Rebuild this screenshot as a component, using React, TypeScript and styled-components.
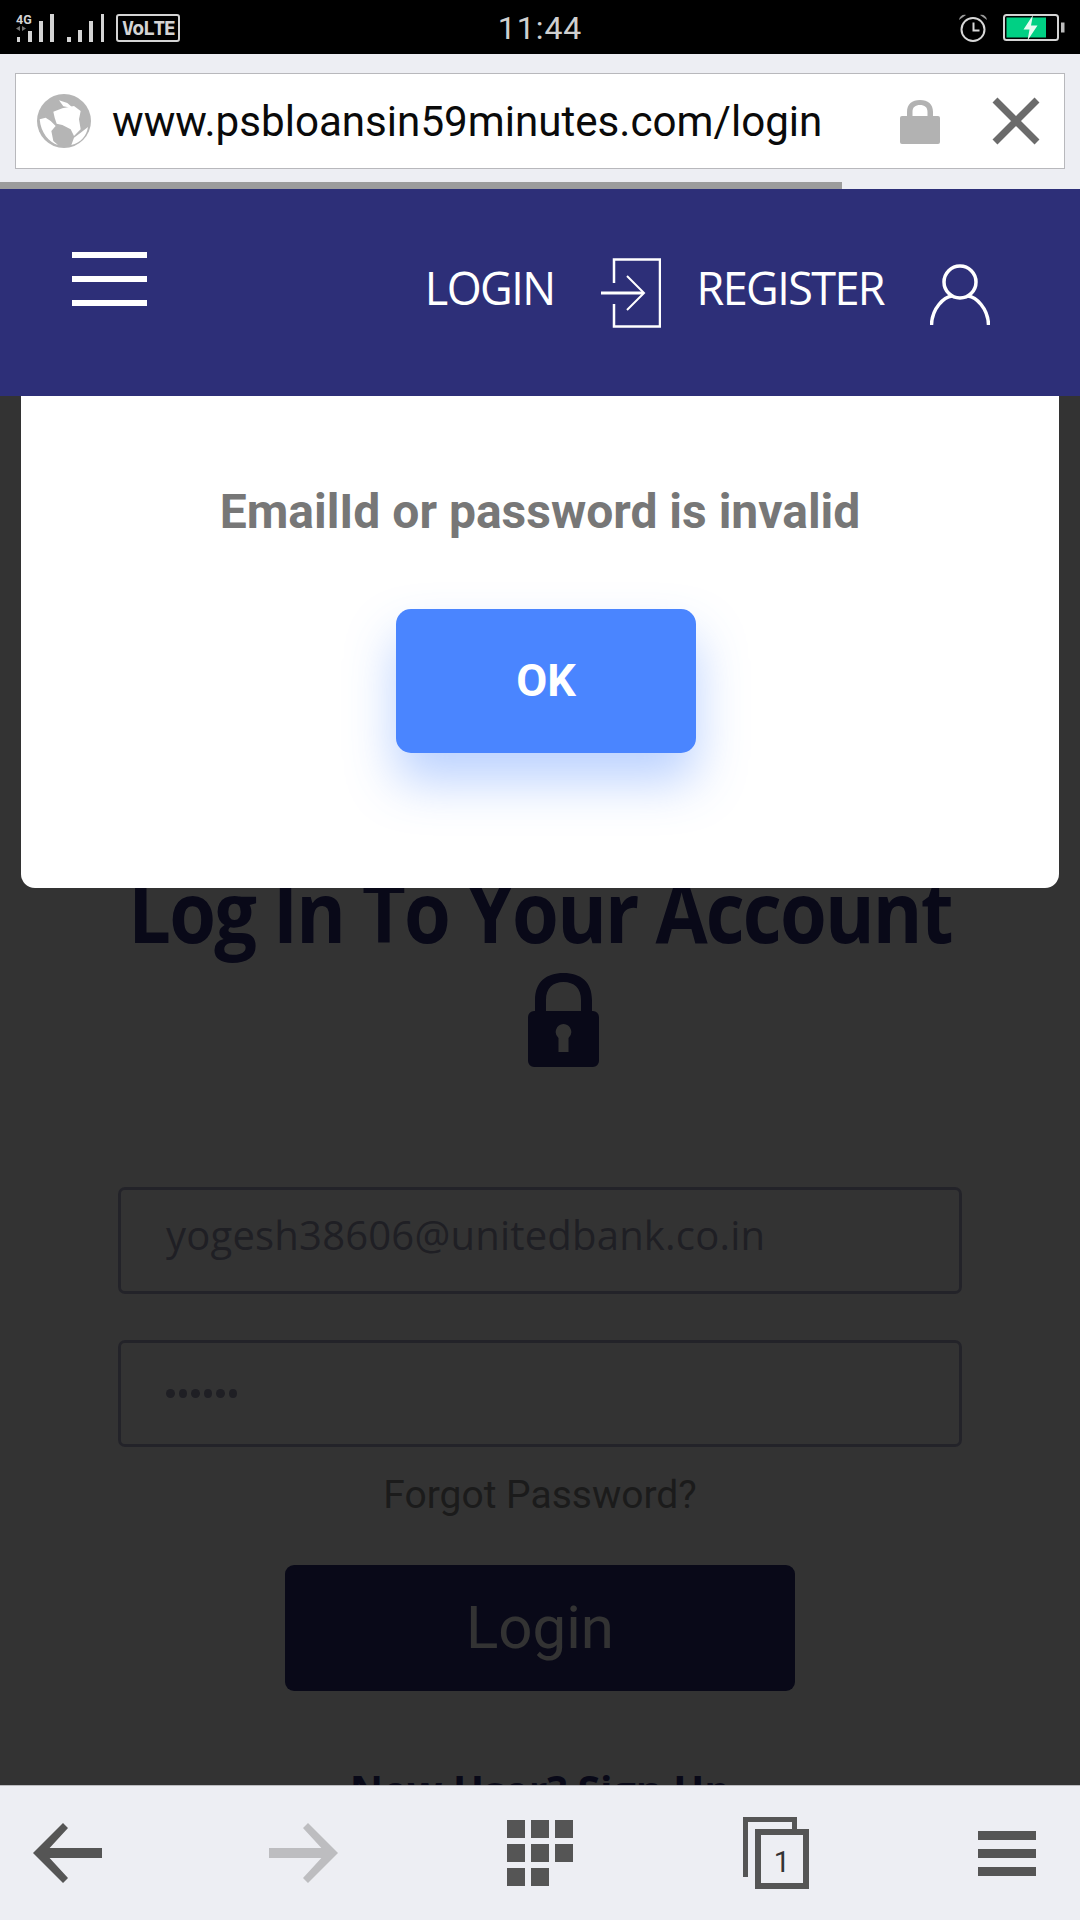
import React from "react";
import styled, { createGlobalStyle } from "styled-components";

const navy = "#2d2f78";

const GlobalStyle = createGlobalStyle`
  html, body {
    margin: 0;
    padding: 0;
    background: #000;
  }
  * {
    box-sizing: border-box;
  }
`;

const Screen = styled.div`
  width: 1080px;
  height: 1920px;
  display: flex;
  flex-direction: column;
  overflow: hidden;
  font-family: Roboto, "Liberation Sans", sans-serif;
`;

const StatusBar = styled.div`
  height: 54px;
  flex: none;
  background: #000;
  display: grid;
  grid-template-columns: 1fr auto 1fr;
  align-items: center;
  padding: 0 15px;
`;

const StatusLeft = styled.div`
  display: flex;
  align-items: center;
  gap: 11px;
`;

const StatusRight = styled.div`
  display: flex;
  align-items: center;
  justify-content: flex-end;
  gap: 15px;
`;

const VolteBadge = styled.div`
  width: 64px;
  height: 28px;
  border: 2px solid #d4d4d4;
  border-radius: 3px;
  color: #d4d4d4;
  font-family: "DejaVu Sans Mono", monospace;
  font-size: 20px;
  font-weight: 700;
  line-height: 24px;
  text-align: center;
  letter-spacing: -1.6px;
`;

const Clock = styled.div`
  color: #cfcfcf;
  font-size: 32px;
  letter-spacing: 1px;
  line-height: 56px;
`;

const BrowserBar = styled.div`
  height: 135px;
  flex: none;
  background: #edeef3;
  padding-top: 19px;
`;

const AddressBox = styled.div`
  height: 96px;
  margin: 0 15px;
  background: #fff;
  border: 1px solid #b8b8bc;
  display: flex;
  align-items: center;
  padding: 0 24px 0 21px;
`;

const UrlText = styled.div`
  flex: 1;
  margin-left: 21px;
  color: #0a0a0a;
  font-size: 42.15px;
  white-space: nowrap;
`;

const AddressLock = styled.div`
  display: flex;
  margin-right: 52px;
`;

const ProgressBar = styled.div<{ $percent: number }>`
  width: ${(p) => p.$percent}%;
  height: 7px;
  margin-top: 13px;
  background: #9c9c9c;
`;

const NavBar = styled.div`
  height: 207px;
  flex: none;
  background: ${navy};
  position: relative;
  z-index: 3;
  display: flex;
  padding: 63px 90px 0 72px;
  color: #fff;
`;

const Burger = styled.div`
  width: 75px;
  display: flex;
  flex-direction: column;
  gap: 18px;
`;

const BurgerLine = styled.span`
  height: 6px;
  background: #fff;
`;

const NavGroup = styled.div`
  margin-left: auto;
  display: flex;
  align-items: flex-start;
`;

const NavLabel = styled.div<{ $before: number; $after: number }>`
  font-family: "Open Sans", sans-serif;
  font-size: 45px;
  line-height: 40px;
  margin: 16px ${(p) => p.$after}px 0 ${(p) => p.$before}px;
  letter-spacing: -1.6px;
  white-space: nowrap;
`;

const NavIcon = styled.div<{ $drop: number }>`
  display: flex;
  margin-top: ${(p) => p.$drop}px;
`;

const PageArea = styled.div`
  flex: 1;
  position: relative;
  overflow: hidden;
  background: #fff;
`;

const PageContent = styled.div`
  padding: 470px 118px 0;
  display: flex;
  flex-direction: column;
  align-items: stretch;
`;

const Heading = styled.h1`
  margin: 0 -118px;
  font-family: "Open Sans", sans-serif;
  font-size: 84px;
  line-height: 90px;
  font-weight: 700;
  letter-spacing: -2px;
  color: ${navy};
  text-align: center;
  white-space: nowrap;
  transform: scaleX(0.9);
`;

const LockRow = styled.div`
  display: flex;
  justify-content: center;
  padding-left: 46px;
  margin-top: 16px;
  margin-bottom: 120px;
`;

const Field = styled.div<{ $gap: number }>`
  height: 107px;
  margin-bottom: ${(p) => p.$gap}px;
  border: 3px solid #b0b0cc;
  border-radius: 7px;
  padding-left: 45px;
  color: #9a9ab4;
  font-family: "Open Sans", sans-serif;
  font-size: 40px;
  letter-spacing: 0.2px;
  line-height: 90px;
`;

const Dots = styled.div`
  display: flex;
  gap: 4px;
  height: 100%;
  align-items: center;
`;

const Dot = styled.span`
  width: 8.5px;
  height: 9px;
  border-radius: 50%;
  background: #9a9ab4;
`;

const ForgotLink = styled.div`
  margin-top: 25px;
  text-align: center;
  color: #888;
  font-size: 39px;
  line-height: 46px;
`;

const LoginButton = styled.div`
  width: 510px;
  height: 126px;
  margin: 47px auto 0;
  background: ${navy};
  border-radius: 9px;
  color: #fff;
  font-size: 60px;
  text-align: center;
  line-height: 126px;
`;

const SignUpLine = styled.div`
  margin-top: 72px;
  text-align: center;
  color: ${navy};
  font-family: "Open Sans", sans-serif;
  font-size: 41px;
  font-weight: 700;
  line-height: 54px;
`;

const Overlay = styled.div`
  position: absolute;
  inset: 0;
  background: rgba(0, 0, 0, 0.8);
`;

const Modal = styled.div`
  position: absolute;
  top: 0;
  left: 21px;
  width: 1038px;
  height: 492px;
  background: #fff;
  border-radius: 0 0 14px 14px;
  display: flex;
  flex-direction: column;
  align-items: center;
`;

const ModalText = styled.div`
  margin-top: 88px;
  color: #777;
  font-size: 48px;
  font-weight: 700;
  line-height: 56px;
  white-space: nowrap;
`;

const OkButton = styled.div`
  width: 300px;
  height: 144px;
  margin-top: 69px;
  margin-left: 12px;
  background: #4a85ff;
  border-radius: 15px;
  color: #fff;
  font-size: 45px;
  font-weight: 700;
  line-height: 144px;
  text-align: center;
  box-shadow: 0 28px 50px rgba(74, 133, 255, 0.38);
`;

const ToolBar = styled.div`
  height: 135px;
  flex: none;
  background: #edeef3;
  border-top: 1px solid #bcbcc0;
  position: relative;
  z-index: 3;
  display: flex;
  align-items: center;
  padding-left: 33px;
`;

const ToolItem = styled.div<{ $gap: number }>`
  display: flex;
  margin-right: ${(p) => p.$gap}px;
`;

const ArrowSvg = styled.svg<{ $flip?: boolean }>`
  transform: ${(p) => (p.$flip ? "scaleX(-1)" : "none")};
`;

const SignalIcon = () => (
  <svg width="90" height="36" viewBox="15 9 90 36">
    <text x="16" y="23" fill="#d4d4d4" fontFamily="Roboto, sans-serif" fontSize="12.5" fontWeight="700">
      4G
    </text>
    <path d="M20 25l-4 2.500 4 2.500zM22 25l4 2.500-4 2.500z" fill="#777" />
    <path
      d="M17 36h3v5h-3zM28 30h4v11h-4zM39 20h4v21h-4zM50 13h4v28h-4zM67 36h4v5h-4zM78 29h4v12h-4zM89 20h4v21h-4zM101 13h3v28h-3z"
      fill="#d4d4d4"
    />
  </svg>
);

const AlarmIcon = () => (
  <svg width="30" height="30" viewBox="0 0 30 30">
    <circle cx="15" cy="16.5" r="11.5" fill="none" stroke="#d8d8d8" strokeWidth="2" />
    <path d="M15.500 9.500v8h6" fill="none" stroke="#d8d8d8" strokeWidth="2" />
    <path d="M1 7c.5-4 4-6 7-5zM29 7c-.5-4-4-6-7-5z" fill="#9a9a9a" />
  </svg>
);

const BatteryIcon = () => (
  <svg width="62" height="28" viewBox="0 0 62 28">
    <rect x="1" y="1" width="54" height="25" rx="2.5" fill="none" stroke="#d4d4d4" strokeWidth="2" />
    <rect x="3.5" y="3.5" width="39.5" height="20" fill="#00d084" />
    <rect x="58" y="8.5" width="3.5" height="10" fill="#bcbcbc" />
    <path d="M30 1l-9.500 14.500h6l-2 11 10-15h-6.500z" fill="#e6fbf2" />
  </svg>
);

const GlobeIcon = () => (
  <svg width="54" height="54" viewBox="19 19 162 162">
    <circle cx="100" cy="100" r="81" fill="#b5b5b5" />
    <path d="M68 72L95 62l35-7 20 15-5 25 5 30-20 20-10-20-25-13-17-4-6-18z" fill="#fff" />
    <path d="M27 95l18-5 15 10 15 15-13 15 6 30 14 12C55 165 30 135 27 95z" fill="#fff" />
    <path d="M122 172l8-22 20-15 22-17c-4 27-22 47-50 54z" fill="#fff" />
    <path d="M85 38l25 8 18 16-30-6z" fill="#fff" />
  </svg>
);

const PadlockSmall = () => (
  <svg width="40" height="45" viewBox="0 0 40 45">
    <path d="M7 17v-4C7 5 12 1 20 1s13 4 13 12v4h-5.500v-4c0-5-3-7-7.500-7s-7.500 2-7.500 7v4z" fill="#b2b2b2" />
    <rect x="0" y="17" width="40" height="28" rx="2" fill="#b2b2b2" />
  </svg>
);

const CloseIcon = () => (
  <svg width="48" height="48" viewBox="0 0 48 48">
    <path d="M3 3l42 42M45 3L3 45" stroke="#6b6b6b" strokeWidth="7" fill="none" />
  </svg>
);

const DoorArrowIcon = () => (
  <svg width="60" height="70" viewBox="0 0 60 70">
    <path d="M13 25V1.500h46v67H13V46" fill="none" stroke="#fff" strokeWidth="2.5" />
    <path d="M0 35h42" stroke="#fff" strokeWidth="3" />
    <path d="M26 18l17 17-17 17" fill="none" stroke="#fff" strokeWidth="2" />
  </svg>
);

const PersonIcon = () => (
  <svg width="60" height="62" viewBox="0 0 60 62">
    <ellipse cx="30" cy="18" rx="16" ry="16" fill="none" stroke="#fff" strokeWidth="3.5" />
    <path d="M1.500 61C2 44 14 33 22 32M58.500 61C58 44 46 33 38 32" fill="none" stroke="#fff" strokeWidth="3.5" />
  </svg>
);

const BigLock = () => (
  <svg width="71" height="95" viewBox="0 0 71 95">
    <path d="M7 42V28C7 10 18 1 35.500 1S64 10 64 28v14H53V28c0-12-7-18-17.500-18S18 16 18 28v14z" fill={navy} />
    <path
      fillRule="evenodd"
      d="M6 39h59a6 6 0 0 1 6 6v44a6 6 0 0 1-6 6H6a6 6 0 0 1-6-6V45a6 6 0 0 1 6-6zM35.500 52a8 8 0 0 0-5 14v14h10V66a8 8 0 0 0-5-14z"
      fill={navy}
    />
  </svg>
);

const ArrowIcon = ({ color, flip }: { color: string; flip?: boolean }) => (
  <ArrowSvg width="69" height="60" viewBox="0 0 69 60" $flip={flip}>
    <path d="M30 0l5 5L12 30l23 25-5 5L0 30z" fill={color} />
    <path d="M12 25h57v10H12z" fill={color} />
  </ArrowSvg>
);

const GridIcon = () => (
  <svg width="66" height="66" viewBox="0 0 66 66">
    <path
      d="M0 0h18v18H0zM24 0h18v18H24zM48 0h18v18H48zM0 24h18v18H0zM24 24h18v18H24zM48 24h18v18H48zM0 48h18v18H0zM24 48h18v18H24z"
      fill="#555"
    />
  </svg>
);

const TabsIcon = () => (
  <svg width="66" height="72" viewBox="0 0 66 72">
    <path d="M0 60V0h54v18h-5V5H5v55z" fill="#555" />
    <path fillRule="evenodd" d="M12 12h54v60H12zM18 18v48h42V18z" fill="#555" />
    <text x="39" y="55" textAnchor="middle" fill="#333" fontFamily="Roboto, sans-serif" fontSize="29">
      1
    </text>
  </svg>
);

const MenuIcon = () => (
  <svg width="58" height="45" viewBox="0 0 58 45">
    <path d="M0 0h58v9H0zM0 18h58v9H0zM0 36h58v9H0z" fill="#555" />
  </svg>
);

const App: React.FC = () => {
  return (
    <Screen>
      <GlobalStyle />
      <StatusBar>
        <StatusLeft>
          <SignalIcon />
          <VolteBadge>VoLTE</VolteBadge>
        </StatusLeft>
        <Clock>11:44</Clock>
        <StatusRight>
          <AlarmIcon />
          <BatteryIcon />
        </StatusRight>
      </StatusBar>

      <BrowserBar>
        <AddressBox>
          <GlobeIcon />
          <UrlText>www.psbloansin59minutes.com/login</UrlText>
          <AddressLock>
            <PadlockSmall />
          </AddressLock>
          <CloseIcon />
        </AddressBox>
        <ProgressBar $percent={78} />
      </BrowserBar>

      <NavBar>
        <Burger>
          <BurgerLine />
          <BurgerLine />
          <BurgerLine />
        </Burger>
        <NavGroup>
          <NavLabel $before={0} $after={47}>
            LOGIN
          </NavLabel>
          <NavIcon $drop={6}>
            <DoorArrowIcon />
          </NavIcon>
          <NavLabel $before={35} $after={46}>
            REGISTER
          </NavLabel>
          <NavIcon $drop={12}>
            <PersonIcon />
          </NavIcon>
        </NavGroup>
      </NavBar>

      <PageArea>
        <PageContent>
          <Heading>Log In To Your Account</Heading>
          <LockRow>
            <BigLock />
          </LockRow>
          <Field $gap={46}>yogesh38606@unitedbank.co.in</Field>
          <Field $gap={0}>
            <Dots>
              {[0, 1, 2, 3, 4, 5].map((i) => (
                <Dot key={i} />
              ))}
            </Dots>
          </Field>
          <ForgotLink>Forgot Password?</ForgotLink>
          <LoginButton>Login</LoginButton>
          <SignUpLine>New User? Sign Up</SignUpLine>
        </PageContent>
        <Overlay />
        <Modal>
          <ModalText>EmailId or password is invalid</ModalText>
          <OkButton>OK</OkButton>
        </Modal>
      </PageArea>

      <ToolBar>
        <ToolItem $gap={167}>
          <ArrowIcon color="#555" />
        </ToolItem>
        <ToolItem $gap={169}>
          <ArrowIcon color="#bdbdc0" flip />
        </ToolItem>
        <ToolItem $gap={170}>
          <GridIcon />
        </ToolItem>
        <ToolItem $gap={169}>
          <TabsIcon />
        </ToolItem>
        <ToolItem $gap={0}>
          <MenuIcon />
        </ToolItem>
      </ToolBar>
    </Screen>
  );
};

export default App;
